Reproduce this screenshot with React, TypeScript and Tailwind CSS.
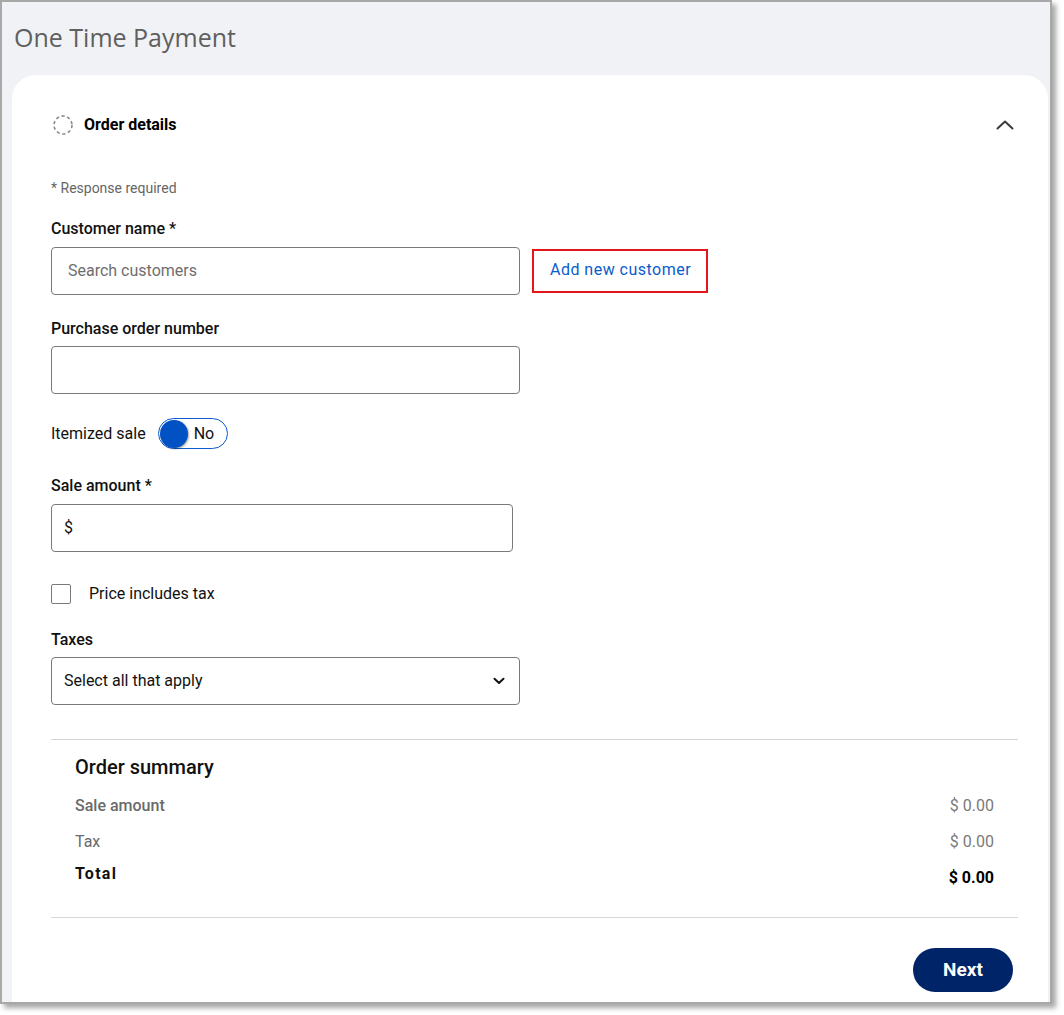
import { useState } from "react"

function DashedCircle() {
  return (
    <svg width="22" height="22" viewBox="0 0 22 22" fill="none">
      <circle cx="11" cy="11" r="9" stroke="#8a8a8a" strokeWidth="1.6" strokeDasharray="3.2 2.6" />
    </svg>
  )
}

function ChevronUp() {
  return (
    <svg width="18" height="10" viewBox="0 0 18 10" fill="none">
      <path d="M1.5 8.5L9 1.5l7.5 7" stroke="#3a3a3a" strokeWidth="2" strokeLinecap="round" strokeLinejoin="round" />
    </svg>
  )
}

function ChevronDown() {
  return (
    <svg width="12" height="8" viewBox="0 0 12 8" fill="none">
      <path d="M1.5 1.8L6 6l4.5-4.2" stroke="#111" strokeWidth="2" strokeLinecap="round" strokeLinejoin="round" />
    </svg>
  )
}

function Label({ children, className = "" }: { children: React.ReactNode; className?: string }) {
  return <div className={`text-[16px] leading-5 font-medium text-[#111] ${className}`}>{children}</div>
}

export default function App() {
  const [itemized] = useState(false)

  return (
    <div className="min-h-screen bg-white" style={{ fontFamily: "Roboto, 'Liberation Sans', sans-serif" }}>
      <div className="h-[1004px] w-[1052px] overflow-hidden border-2 border-[#a8a8a8] bg-[#f1f2f6] shadow-[4px_4px_5px_rgba(0,0,0,0.35)]">
        <h1
          className="pl-3 pt-[18px] text-[25px] leading-[34px] font-normal text-[#5f5f5f]"
          style={{ fontFamily: "'Open Sans', 'Noto Sans', sans-serif" }}
        >
          One Time Payment
        </h1>

        <div className="ml-[10px] mr-[2px] mt-[21px] rounded-t-[24px] bg-white pb-10 pl-[39px] pr-[30px] pt-[38px]">
          <div className="flex h-6 items-center justify-between">
            <div className="flex items-center gap-[10px]">
              <div className="ml-[1px]">
                <DashedCircle />
              </div>
              <span className="text-[16px] font-bold text-black">Order details</span>
            </div>
            <div className="mr-[4px]">
              <ChevronUp />
            </div>
          </div>

          <div className="mt-[42px] text-[14px] leading-[18px] text-[#666]">* Response required</div>

          <Label className="mt-[22px]">Customer name *</Label>
          <div className="mt-2 flex items-center gap-3">
            <div className="flex h-12 w-[469px] items-center rounded border border-[#7a7a7a] px-4 text-[16px] text-[#6e6e6e]">
              Search customers
            </div>
            <div className="flex h-[44px] w-[176px] items-center border-2 border-[#e4161b] pb-[2px] pl-4 text-[16px] tracking-[0.03em] text-[#0b5ccc]">
              Add new customer
            </div>
          </div>

          <Label className="mt-6">Purchase order number</Label>
          <div className="mt-[7px] h-12 w-[469px] rounded border border-[#7a7a7a]" />

          <div className="mt-6 flex items-center gap-3">
            <span className="text-[16px] text-[#111]">Itemized sale</span>
            <div className="flex h-[31px] w-[70px] items-center rounded-full border border-[#0b5ccc] pl-[1px]">
              <div className="h-[28px] w-[28px] rounded-full bg-[#0052c4] shadow-[1px_1px_2px_rgba(0,0,0,0.35)]" />
              <span className="ml-[6px] text-[16px] text-[#111]">{itemized ? "Yes" : "No"}</span>
            </div>
          </div>

          <Label className="mt-[27px]">Sale amount *</Label>
          <div className="mt-2 flex h-12 w-[462px] items-center rounded border border-[#7a7a7a] px-3 text-[16px] text-[#111]">
            $
          </div>

          <div className="mt-[30px] flex items-center">
            <div className="h-5 w-5 rounded-[2px] border border-[#7a7a7a]" />
            <span className="ml-[18px] text-[16px] text-[#111]">Price includes tax</span>
          </div>

          <Label className="mt-[24px]">Taxes</Label>
          <div className="mt-[7px] flex h-12 w-[469px] items-center justify-between rounded border border-[#7a7a7a] pl-3 pr-[14px] text-[16px] text-[#111]">
            <span>Select all that apply</span>
            <ChevronDown />
          </div>

          <div className="mt-[34px] border-t border-[#d6d6d6]" />

          <div className="px-6 pt-[13px] pb-[29px]">
            <div className="text-[20px] leading-7 font-medium text-[#111]">Order summary</div>
            <div className="mt-[15px] flex justify-between text-[16px] leading-5">
              <span className="font-medium text-[#6a6a6a]">Sale amount</span>
              <span className="text-[#7a7a7a]">$ 0.00</span>
            </div>
            <div className="mt-4 flex justify-between text-[16px] leading-5">
              <span className="text-[#6a6a6a]">Tax</span>
              <span className="text-[#7a7a7a]">$ 0.00</span>
            </div>
            <div className="mt-[12px] flex justify-between text-[16px] leading-5">
              <span className="font-bold tracking-[0.08em] text-[#111]">Total</span>
              <span className="mt-1 font-bold text-black">$ 0.00</span>
            </div>
          </div>

          <div className="border-t border-[#d6d6d6]" />

          <div className="mt-[30px] flex justify-end pr-[5px]">
            <button className="h-[44px] w-[100px] rounded-full bg-[#002468] text-[19px] font-bold text-white">
              Next
            </button>
          </div>
        </div>
      </div>
    </div>
  )
}
